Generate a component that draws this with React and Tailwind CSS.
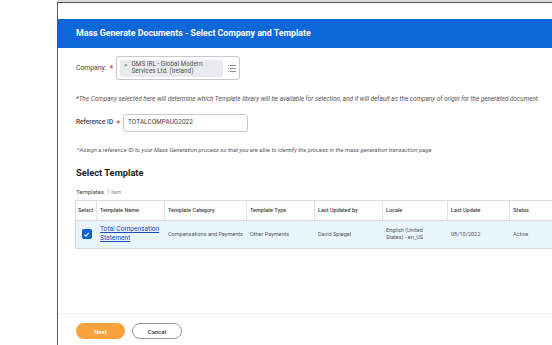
import React from 'react';

const cols = [
  { label: 'Select', w: 'w-[21px]' },
  { label: 'Template Name', w: 'w-[68px]' },
  { label: 'Template Category', w: 'w-[82px]' },
  { label: 'Template Type', w: 'w-[68px]' },
  { label: 'Last Updated by', w: 'w-[68px]' },
  { label: 'Locale', w: 'w-[65px]' },
  { label: 'Last Update', w: 'w-[62px]' },
  { label: 'Status', w: 'w-[60px]' },
];

const Req = () => <span className="text-[#d9363e] text-[9px] leading-none ml-[3px] mt-[3px]">*</span>;

export default function App() {
  return (
    <div
      className="w-[552px] h-[345px] bg-white overflow-hidden flex flex-col"
      style={{ fontFamily: 'Roboto, "Liberation Sans", sans-serif' }}
    >
      {/* faint background strip */}
      <div className="h-[2px] ml-[57px] bg-[#d8d8d8]" />
      <div className="flex flex-1 min-h-0">
        <div className="w-[57px] shrink-0" />
        <div className="flex-1 border-l border-t border-[#555] flex flex-col min-w-0">
          <div className="h-[16px]" />
          <div className="h-[29px] bg-[#0c68d8] flex items-center pl-[18px]">
            <span className="text-white text-[8.8px] font-bold">
              Mass Generate Documents - Select Company and Template
            </span>
          </div>

          <div className="pl-[18px] flex flex-col text-[#333]">
            {/* Company */}
            <div className="flex items-center mt-[8px] h-[24px]">
              <span className="text-[6.8px] text-[#444]">Company:</span>
              <Req />
              <div className="ml-[3px] w-[124px] h-[24px] border border-[#c9c9c9] rounded-[3px] flex items-center px-[3px]">
                <div className="w-[104px] h-[17px] bg-[#e8eaed] rounded-[2px] flex items-start px-[4px] pt-[1px]">
                  <span className="text-[6px] text-[#777] mr-[4px] leading-[7.5px]">×</span>
                  <span className="text-[6.4px] text-[#555] leading-[7.5px]">
                    GMS IRL - Global Modern Services Ltd. (Ireland)
                  </span>
                </div>
                <svg width="8" height="7" viewBox="0 0 8 7" className="ml-[5px]">
                  <g fill="#888">
                    <rect x="0" y="0" width="1" height="1" />
                    <rect x="2" y="0" width="6" height="1" />
                    <rect x="0" y="3" width="1" height="1" />
                    <rect x="2" y="3" width="6" height="1" />
                    <rect x="0" y="6" width="1" height="1" />
                    <rect x="2" y="6" width="6" height="1" />
                  </g>
                </svg>
              </div>
            </div>

            <p className="mt-[15px] text-[6.4px] italic text-[#555] leading-[8px] whitespace-nowrap">
              *The Company selected here will determine which Template library will be available for selection, and it will default as the company of origin for the generated document.
            </p>

            {/* Reference ID */}
            <div className="flex items-center mt-[11px] h-[18px]">
              <span className="text-[6.5px] text-[#444] font-medium">Reference ID</span>
              <Req />
              <div className="ml-[3px] w-[125px] h-[18px] border border-[#c9c9c9] rounded-[3px] flex items-center px-[4px]">
                <span className="text-[6.5px] text-[#444]">TOTALCOMPAUG2022</span>
              </div>
            </div>

            <p className="mt-[14px] text-[5.9px] italic text-[#555] leading-[8px] pl-[1px]">
              *Assign a reference ID to your Mass Generation process so that you are able to identify the process in the mass generation transaction page
            </p>

            <h2 className="mt-[13px] text-[9.3px] font-bold text-[#222] leading-[12px]">Select Template</h2>

            <div className="mt-[8px] flex items-baseline">
              <span className="text-[6px] text-[#444]">Templates</span>
              <span className="text-[5px] text-[#888] ml-[3px]">1 item</span>
            </div>

            {/* table */}
            <div className="mt-[3px] ml-[-1px] border-l border-t border-b border-[#dcdcdc] flex flex-col">
              <div className="flex h-[20px] border-b border-[#dcdcdc]">
                {cols.map((c, i) => (
                  <div
                    key={c.label}
                    className={`${c.w} shrink-0 flex items-center ${i === 0 ? 'pl-[2px]' : 'pl-[3px]'} ${i < cols.length - 1 ? 'border-r border-[#e3e3e3]' : ''}`}
                  >
                    <span className="text-[5.5px] text-[#444] font-medium whitespace-nowrap">{c.label}</span>
                  </div>
                ))}
              </div>
              <div className="flex h-[27px] bg-[#e9f5fd]">
                <div className="w-[21px] shrink-0 flex items-center justify-center">
                  <div className="w-[10px] h-[10px] bg-[#0b5fd0] rounded-[2px] flex items-center justify-center">
                    <svg width="7" height="7" viewBox="0 0 10 10">
                      <path d="M2 5.2 L4.2 7.4 L8.2 2.8" stroke="white" strokeWidth="1.6" fill="none" />
                    </svg>
                  </div>
                </div>
                <div className="w-[68px] shrink-0 flex items-center pl-[3px]">
                  <a className="text-[6.6px] leading-[9px] text-[#1e4db7] underline">
                    Total Compensation Statement
                  </a>
                </div>
                <div className="w-[82px] shrink-0 flex items-center pl-[3px]">
                  <span className="text-[5.5px] text-[#555] whitespace-nowrap">Compensations and Payments</span>
                </div>
                <div className="w-[68px] shrink-0 flex items-center pl-[3px]">
                  <span className="text-[5.5px] text-[#555]">Other Payments</span>
                </div>
                <div className="w-[68px] shrink-0 flex items-center pl-[3px]">
                  <span className="text-[5.5px] text-[#555]">David Spiegel</span>
                </div>
                <div className="w-[65px] shrink-0 flex items-center pl-[3px]">
                  <span className="w-[45px] text-[5.5px] leading-[7.5px] text-[#555]">English (United States) - en_US</span>
                </div>
                <div className="w-[62px] shrink-0 flex items-center pl-[3px]">
                  <span className="text-[5.5px] text-[#555]">08/10/2022</span>
                </div>
                <div className="w-[60px] shrink-0 flex items-center pl-[3px]">
                  <span className="text-[5.5px] text-[#555]">Active</span>
                </div>
              </div>
            </div>
          </div>

          <div className="flex-1" />
          <div className="border-t border-[#f0f0f0] h-[32px] flex items-start pt-[9px] pl-[18px] gap-[7px]">
            <button className="w-[49px] h-[16px] rounded-full bg-[#f7a23a] text-white text-[6px] font-medium">
              Next
            </button>
            <button className="w-[50px] h-[16px] rounded-full border border-[#999] bg-white text-[#333] text-[6px] font-medium">
              Cancel
            </button>
          </div>
        </div>
      </div>
    </div>
  );
}
